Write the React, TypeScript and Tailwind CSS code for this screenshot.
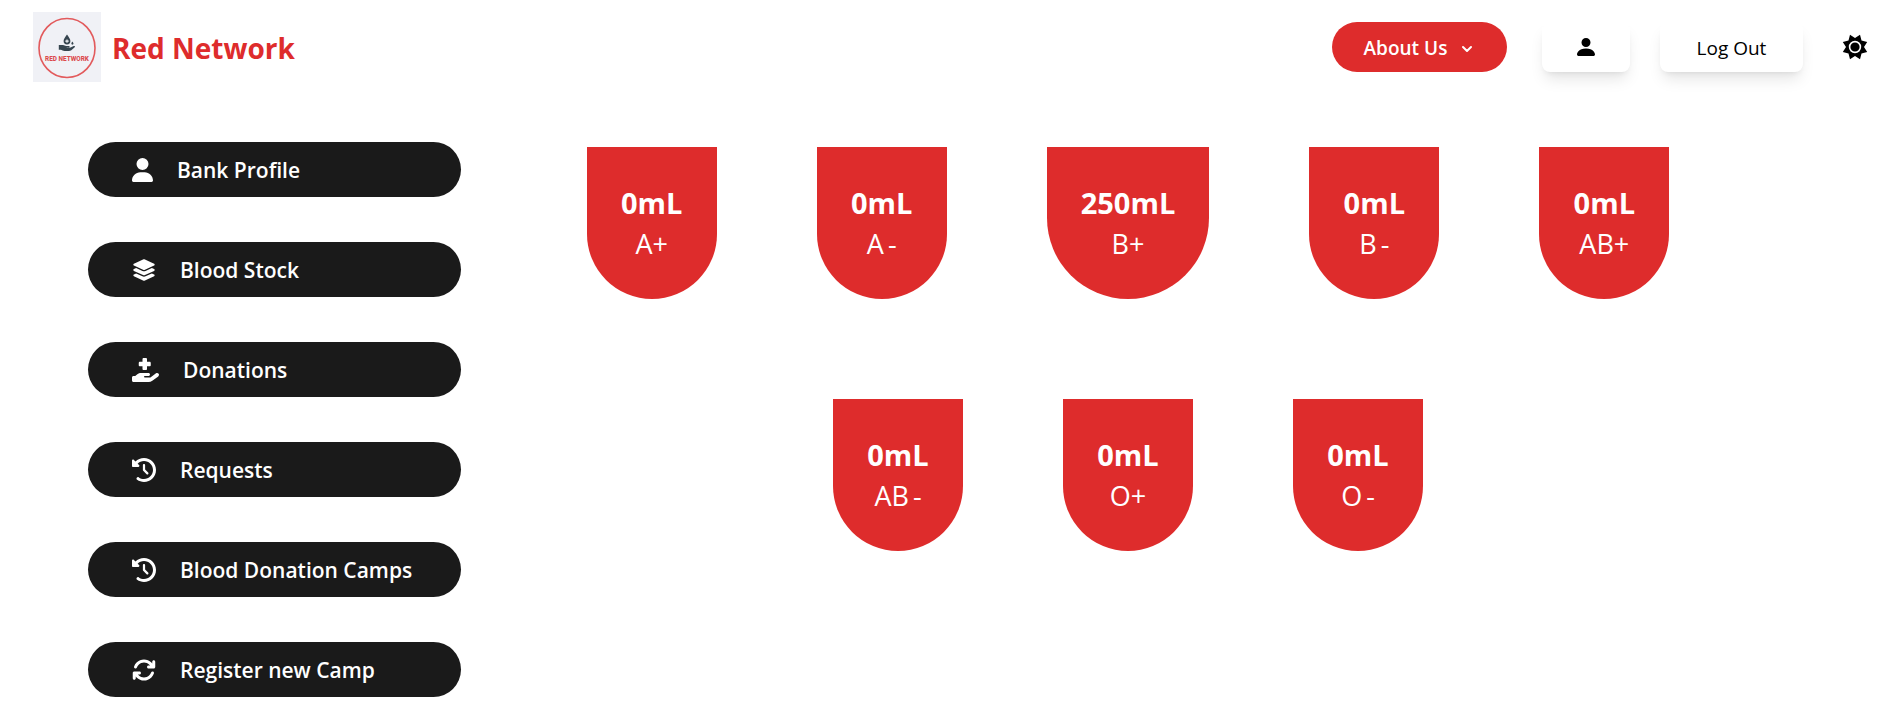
import {
  FaUser,
  FaLayerGroup,
  FaHandHoldingMedical,
  FaClockRotateLeft,
  FaArrowsRotate,
} from "react-icons/fa6";
import { BsPersonFill } from "react-icons/bs";
import { ChevronDown } from "lucide-react";

const links = [
  { label: "Bank Profile", Icon: FaUser, size: "w-[21px]" },
  { label: "Blood Stock", Icon: FaLayerGroup, size: "w-6" },
  { label: "Donations", Icon: FaHandHoldingMedical, size: "w-[27px]" },
  { label: "Requests", Icon: FaClockRotateLeft, size: "w-6" },
  { label: "Blood Donation Camps", Icon: FaClockRotateLeft, size: "w-6" },
  { label: "Register new Camp", Icon: FaArrowsRotate, size: "w-6" },
];

const stock = [
  { group: "A", sign: "+", amount: 0 },
  { group: "A", sign: "-", amount: 0 },
  { group: "B", sign: "+", amount: 250 },
  { group: "B", sign: "-", amount: 0 },
  { group: "AB", sign: "+", amount: 0 },
  { group: "AB", sign: "-", amount: 0 },
  { group: "O", sign: "+", amount: 0 },
  { group: "O", sign: "-", amount: 0 },
];

function Logo() {
  return (
    <svg viewBox="0 0 68 70" className="h-[70px] w-[68px]" role="img" aria-label="Red Network logo">
      <rect width="68" height="70" fill="#f0f1f6" />
      <ellipse cx="34" cy="36" rx="28" ry="29.5" fill="none" stroke="#e25a5c" strokeWidth="1.6" />
      <path
        fillRule="evenodd"
        fill="#36454f"
        d="M34 22.500c1.700 2.600 3.400 4.500 3.400 6.600a3.400 3.400 0 0 1-6.800 0c0-2.100 1.700-4 3.400-6.600zM33.400 27.400v1.100h-1.100v1.200h1.100v1.100h1.200v-1.100h1.100v-1.200h-1.100v-1.100z"
      />
      <path fill="#36454f" d="M39.400 29.400c.7 1 1.100 1.600 1.100 2.200a1.100 1.100 0 0 1-2.200 0c0-.6.400-1.200 1.100-2.200z" />
      <path
        fill="#36454f"
        d="M25.800 33h4.200c1.200 0 2 .9 3.200 1h2.600c1.200 0 1.200 1.700 0 1.700h-2.600c1.500.6 3.500.3 4.900-.4l2.600-1.300c1-.4 1.700.5 1 1.200l-3.400 3c-.8.6-1.500.8-2.500.8h-4.200c-1.500 0-2.600-1.300-4-1.300h-1.800z"
      />
      <text
        x="34"
        y="49"
        textAnchor="middle"
        fontFamily="Roboto, 'Liberation Sans', sans-serif"
        fontSize="6.4"
        fontWeight="800"
        fill="#dc4a4c"
      >
        RED NETWORK
      </text>
    </svg>
  );
}

function SunIcon() {
  return (
    <svg viewBox="0 0 26 26" className="size-[26px]" aria-hidden="true">
      <path
        d="M13 4L18 .8L19.500 6.500L25.200 8L22 13L25.200 18L19.500 19.500L18 25.200L13 22L8 25.200L6.500 19.500L.8 18L4 13L.8 8L6.500 6.500L8 .8z"
        fill="#000"
      />
      <circle cx="13" cy="13" r="5.400" fill="#000" stroke="#fff" strokeWidth="1.600" />
    </svg>
  );
}

export default function App() {
  return (
    <div className="bg-white font-['Open_Sans','Noto_Sans',sans-serif] text-black">
      <header className="flex items-center justify-between pt-3 pr-[27px] pl-[33px]">
        <a href="#home" className="flex items-center gap-[11px] text-[28px] font-bold text-[#de2c2c]">
          <Logo />
          <span className="pt-0.5">Red Network</span>
        </a>
        <nav className="flex items-center">
          <button className="mr-[35px] flex h-[50px] w-[175px] items-center justify-center gap-3 rounded-full bg-[#de2c2c] text-[19px] font-semibold text-white">
            <span className="pt-0.5">About Us</span>
            <ChevronDown className="mt-1 size-4" strokeWidth={3} />
          </button>
          <button
            aria-label="Profile"
            className="mr-[30px] flex h-[50px] w-[88px] items-center justify-center rounded-lg bg-white shadow-lg"
          >
            <BsPersonFill className="size-6" />
          </button>
          <button className="mr-[39px] h-[50px] w-[143px] rounded-lg bg-white pt-0.5 text-[19px] font-medium shadow-lg">
            Log Out
          </button>
          <button aria-label="Toggle theme">
            <SunIcon />
          </button>
        </nav>
      </header>
      <div className="flex items-start pt-[60px] pb-3">
        <aside className="ml-22 flex w-[373px] shrink-0 flex-col gap-[45px]">
          {links.map(({ label, Icon, size }) => (
            <a
              key={label}
              href="#section"
              className="flex h-[55px] items-center gap-6 rounded-full bg-[#1a1a1a] pl-11 text-[21px] font-semibold text-white"
            >
              <Icon className={`h-6 shrink-0 ${size}`} />
              <span className="pt-0.5">{label}</span>
            </a>
          ))}
        </aside>
        <main className="mt-[5px] mr-[200px] ml-[100px] flex flex-1 flex-wrap justify-center gap-[100px]">
          {stock.map(({ group, sign, amount }) => (
            <section
              key={group + sign}
              className="flex h-[152px] min-w-[130px] flex-col items-center justify-center rounded-b-full bg-[#de2c2c] px-[34px] pt-0.5 text-white"
            >
              <h2 className="text-[29px] leading-10 font-bold">{amount}mL</h2>
              <p className="text-[27px] leading-[42px]">
                {group}
                <span className={sign === "-" ? "ml-1" : ""}>{sign}</span>
              </p>
            </section>
          ))}
        </main>
      </div>
    </div>
  );
}
